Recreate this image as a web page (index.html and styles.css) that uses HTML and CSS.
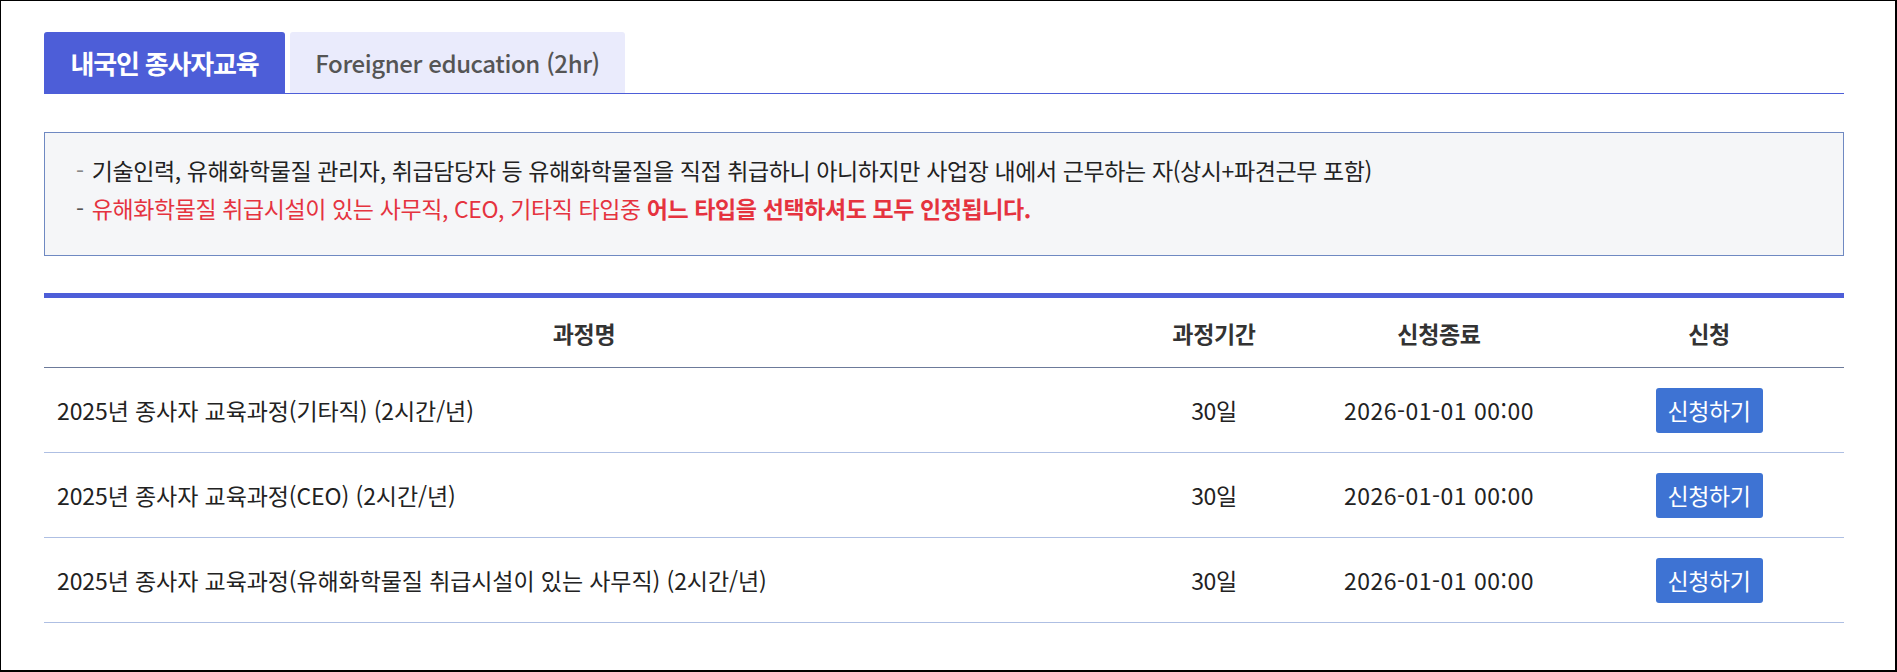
FILE: index.html
```html
<!DOCTYPE html>
<html lang="ko">
<head>
<meta charset="utf-8">
<title>교육 신청</title>
<link rel="stylesheet" href="styles.css">
</head>
<body>
<div class="page">
  <div class="content">
    <ul class="tabs">
      <li class="tab active">내국인 종사자교육</li>
      <li class="tab">Foreigner education (2hr)</li>
    </ul>

    <div class="notice">
      <p class="line"><span class="dash">-</span> 기술인력, 유해화학물질 관리자, 취급담당자 등 유해화학물질을 직접 취급하니 아니하지만 사업장 내에서 근무하는 자(상시+파견근무 포함)</p>
      <p class="line red"><span class="dash dark">-</span> 유해화학물질 취급시설이 있는 사무직, CEO, 기타직 타입중 <strong>어느 타입을 선택하셔도 모두 인정됩니다.</strong></p>
    </div>

    <table class="courses">
      <colgroup>
        <col class="c-name">
        <col class="c-period">
        <col class="c-end">
        <col class="c-apply">
      </colgroup>
      <thead>
        <tr>
          <th>과정명</th>
          <th>과정기간</th>
          <th>신청종료</th>
          <th>신청</th>
        </tr>
      </thead>
      <tbody>
        <tr>
          <td class="name">2025년 종사자 교육과정(기타직) (2시간/년)</td>
          <td>30일</td>
          <td class="date">2026-01-01 00:00</td>
          <td><button class="btn">신청하기</button></td>
        </tr>
        <tr>
          <td class="name">2025년 종사자 교육과정(CEO) (2시간/년)</td>
          <td>30일</td>
          <td class="date">2026-01-01 00:00</td>
          <td><button class="btn">신청하기</button></td>
        </tr>
        <tr>
          <td class="name">2025년 종사자 교육과정(유해화학물질 취급시설이 있는 사무직) (2시간/년)</td>
          <td>30일</td>
          <td class="date">2026-01-01 00:00</td>
          <td><button class="btn">신청하기</button></td>
        </tr>
      </tbody>
    </table>
  </div>
</div>
</body>
</html>
```

FILE: styles.css
```css
* { box-sizing: border-box; }

html, body {
  margin: 0;
  padding: 0;
  background: #fff;
}

body {
  font-family: "Noto Sans CJK KR", "Noto Sans", sans-serif;
  color: #222;
}

.page {
  width: 1897px;
  height: 672px;
  border-top: 1px solid #000;
  border-left: 1px solid #000;
  border-right: 2px solid #000;
  border-bottom: 2px solid #000;
  padding: 31px 0 0 43px;
  overflow: hidden;
}

.content {
  width: 1800px;
}

.tabs {
  list-style: none;
  margin: 0;
  padding: 0;
  display: flex;
  gap: 5px;
  border-bottom: 1px solid #4d5ed8;
}

.tab {
  height: 61px;
  display: flex;
  align-items: center;
  justify-content: center;
  border-radius: 3px 3px 0 0;
  background: #eaebfc;
  color: #555;
  font-size: 24px;
  font-weight: 500;
  letter-spacing: -0.4px;
  width: 335px;
}

.tab.active {
  width: 241px;
  background: #4d5ed8;
  color: #fff;
  font-weight: 700;
  font-size: 26px;
  letter-spacing: -1.2px;
}

.notice {
  margin-top: 38px;
  height: 124px;
  border: 1px solid #6f89c2;
  background: #f5f6f8;
  padding: 18px 30px 0 31px;
}

.line {
  margin: 0;
  font-size: 23px;
  line-height: 38px;
  letter-spacing: -0.4px;
  color: #222;
}

.dash {
  color: #888;
  margin-right: 2px;
}

.dash.dark {
  color: #555;
}

.red {
  color: #e5333f;
}

.red strong {
  font-weight: 700;
}

.courses {
  margin-top: 37px;
  width: 1800px;
  border-collapse: collapse;
  table-layout: fixed;
  border-top: 5px solid #4d5ed8;
}

.c-name { width: 60%; }
.c-period { width: 10%; }
.c-end { width: 15%; }
.c-apply { width: 15%; }

.courses th {
  height: 72px;
  font-size: 23px;
  font-weight: 700;
  color: #333;
  text-align: center;
  border-bottom: 1px solid #6c7a9a;
  padding: 0;
  letter-spacing: -0.3px;
}

.courses td {
  height: 85px;
  font-size: 23px;
  color: #222;
  text-align: center;
  border-bottom: 1px solid #aebfe3;
  padding: 0;
  letter-spacing: -0.4px;
}

.courses td.name {
  text-align: left;
  padding-left: 13px;
  letter-spacing: -0.1px;
}

.courses td.date {
  letter-spacing: 0.5px;
}

.btn {
  width: 107px;
  height: 45px;
  border: 0;
  border-radius: 3px;
  background: #3e73d3;
  color: #fff;
  font-family: "Noto Sans CJK KR", "Noto Sans", sans-serif;
  font-size: 23px;
  letter-spacing: -0.4px;
  padding: 0;
  cursor: pointer;
}
```
